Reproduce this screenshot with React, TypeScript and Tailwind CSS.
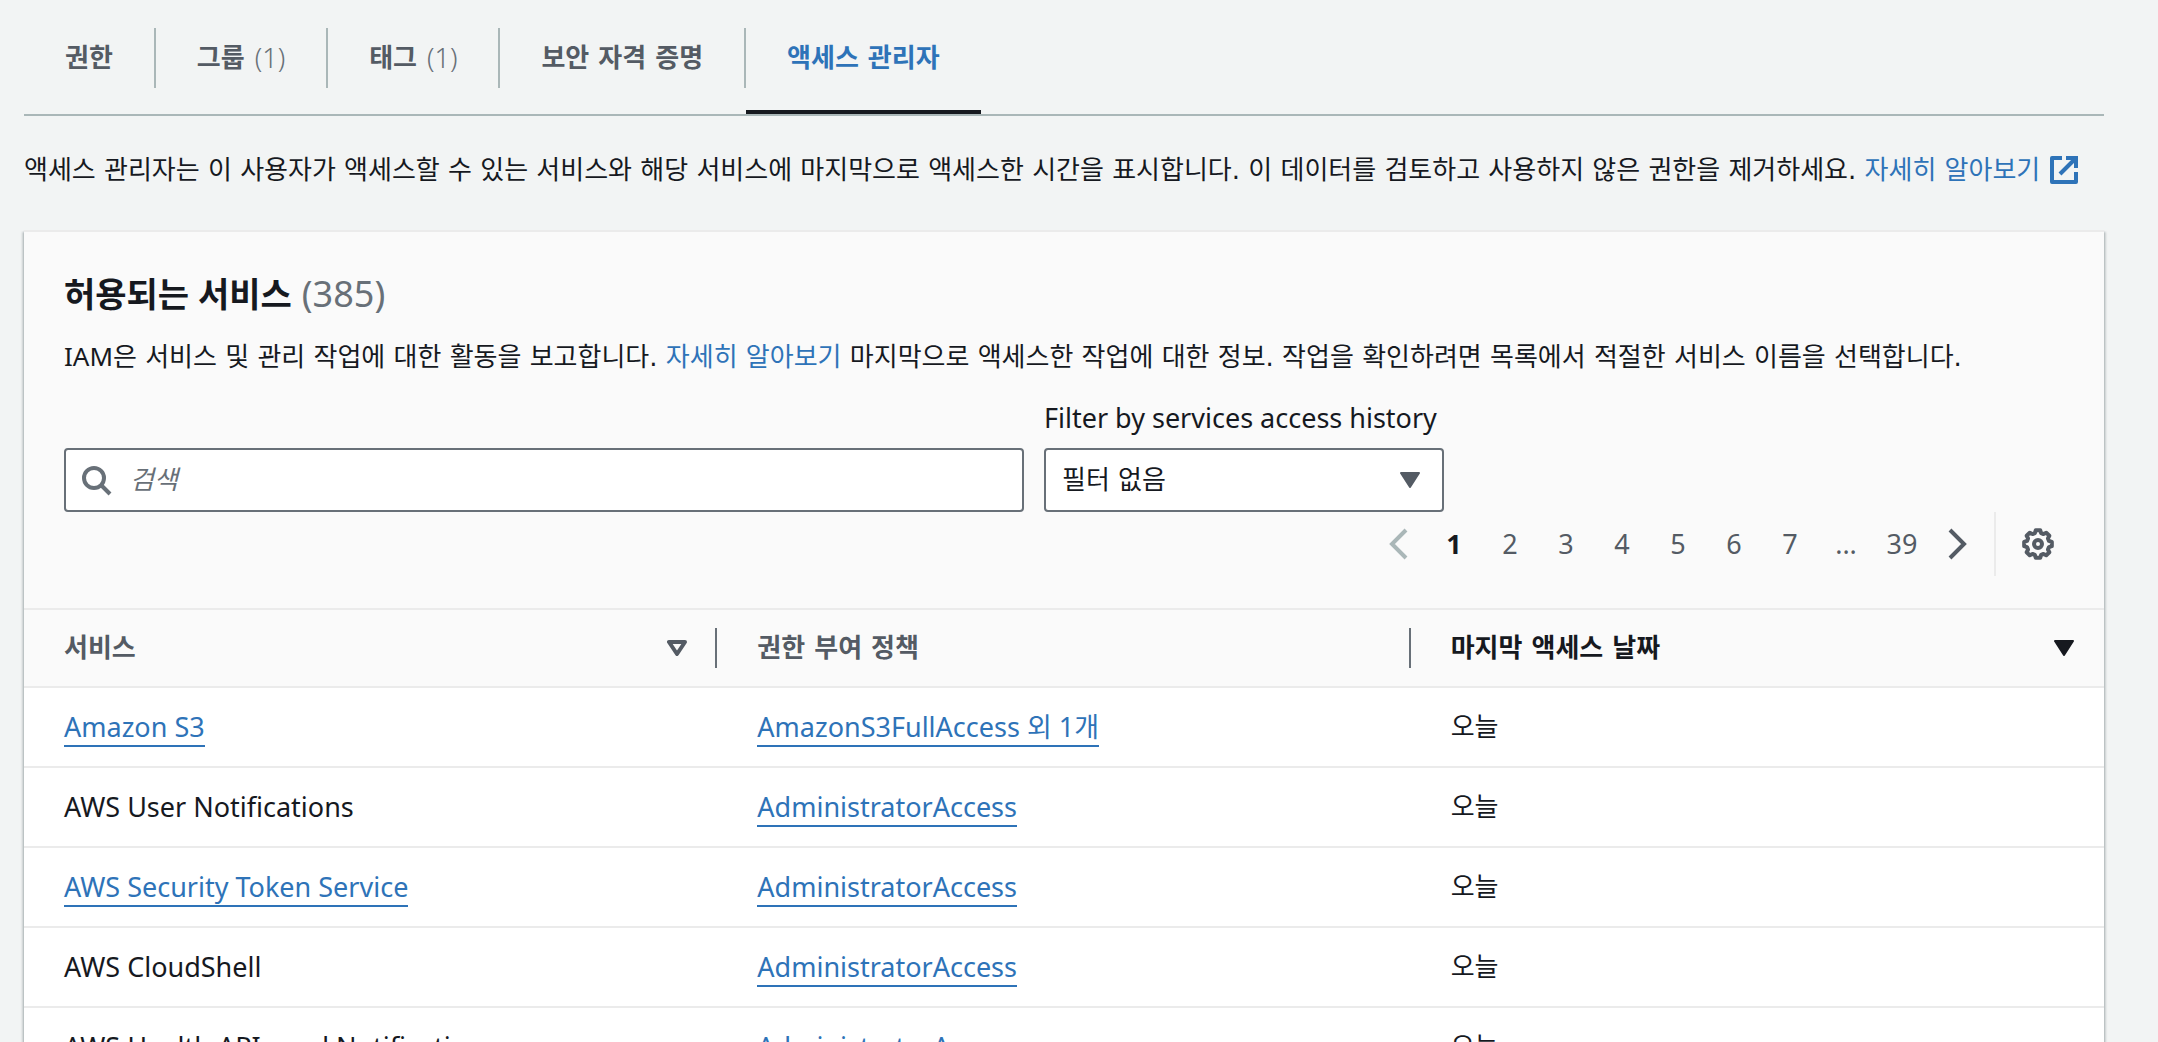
import type { ReactNode } from "react";

const ko = "font-['DejaVu_Sans','Noto_Sans_CJK_KR',sans-serif] text-[26px]";
const latin = "font-['Noto_Sans','Noto_Sans_CJK_KR',sans-serif] text-[27px]";

const tabs = [
  { label: "권한" },
  { label: "그룹", count: 1 },
  { label: "태그", count: 1 },
  { label: "보안 자격 증명" },
  { label: "액세스 관리자", active: true },
];

const rows = [
  { service: "Amazon S3", link: true, policy: "AmazonS3FullAccess", more: "외 1개" },
  { service: "AWS User Notifications", policy: "AdministratorAccess" },
  { service: "AWS Security Token Service", link: true, policy: "AdministratorAccess" },
  { service: "AWS CloudShell", policy: "AdministratorAccess" },
  { service: "AWS Health APIs and Notifications", policy: "AdministratorAccess" },
];

const pages = ["1", "2", "3", "4", "5", "6", "7", "...", "39"];

function gearPath() {
  const points: string[] = [];
  for (let i = 0; i < 8; i++) {
    const shape: [number, number][] = [
      [-9, 14],
      [9, 14],
      [16, 11.4],
      [29, 11.4],
    ];
    for (const [offset, radius] of shape) {
      const angle = ((i * 45 + offset) * Math.PI) / 180;
      points.push(`${(16 + radius * Math.sin(angle)).toFixed(2)} ${(16 - radius * Math.cos(angle)).toFixed(2)}`);
    }
  }
  return `M${points.join("L")}Z`;
}

function GearIcon() {
  return (
    <svg viewBox="0 0 32 32" className="size-8" fill="none" stroke="currentColor" strokeWidth="4" strokeLinejoin="round" aria-hidden="true">
      <path d={gearPath()} />
      <circle cx="16" cy="16" r="4" />
    </svg>
  );
}

function SearchIcon() {
  return (
    <svg viewBox="0 0 32 32" className="size-8" fill="none" stroke="currentColor" strokeWidth="4" aria-hidden="true">
      <circle cx="14" cy="14" r="10" />
      <path d="M21 21l9 9" />
    </svg>
  );
}

function ExternalIcon() {
  return (
    <svg viewBox="0 0 16 16" className="size-8" fill="none" stroke="currentColor" strokeWidth="2" aria-hidden="true">
      <path d="M7 2H2v12h12V9" strokeLinejoin="round" />
      <path d="M9 2h5v5" />
      <path d="M6 10l8-8" />
    </svg>
  );
}

function Triangle({ hollow }: { hollow?: boolean }) {
  return (
    <svg viewBox="0 0 20 16" className="h-4 w-5 shrink-0" stroke="currentColor" strokeLinejoin="round" aria-hidden="true">
      {hollow ? (
        <path d="M2 2h16l-8 12z" fill="none" strokeWidth="4" />
      ) : (
        <path d="M1 1h18l-9 14z" fill="currentColor" strokeWidth="2" />
      )}
    </svg>
  );
}

function Chevron({ left }: { left?: boolean }) {
  return (
    <svg viewBox="0 0 32 32" className="size-8" fill="none" stroke="currentColor" strokeWidth="4" aria-hidden="true">
      <path d={left ? "M24 2L10 16l14 14" : "M8 2l14 14L8 30"} />
    </svg>
  );
}

function HeaderCell({ children, dark, icon, divider }: { children: ReactNode; dark?: boolean; icon?: ReactNode; divider?: boolean }) {
  return (
    <th scope="col" className="w-1/3 border-b-2 border-[#ebebeb] p-0 text-left">
      <div className={`my-[18px] flex h-10 border-r-2 ${divider ? "border-[#687078]" : "border-transparent"}`}>
        <button
          type="button"
          className={`${ko} flex w-full items-center justify-between pr-7 pl-10 font-bold ${dark ? "text-[#16191f]" : "text-[#545b64]"}`}
        >
          <span>{children}</span>
          {icon}
        </button>
      </div>
    </th>
  );
}

function TableLink({ children }: { children: ReactNode }) {
  return (
    <a href="#" className="inline-block border-b-2 border-[#2e73b8] leading-9 text-[#2e73b8]">
      {children}
    </a>
  );
}

export default function App() {
  return (
    <main className={`${ko} h-screen overflow-hidden bg-[#f2f4f4] pt-7 pr-[54px] pl-6 text-[#16191f]`}>
      <nav className="flex border-b-2 border-[#aab7b8]" aria-label="사용자 세부 정보">
        {tabs.map((tab) => (
          <div key={tab.label} className="flex h-[86px] flex-col justify-between">
            <button
              type="button"
              className={`flex h-[60px] items-center gap-[10px] px-[41px] leading-10 font-bold whitespace-nowrap ${
                tab.active ? "text-[#2e73b8]" : "border-r-2 border-[#aab7b8] text-[#545b64]"
              }`}
            >
              {tab.label}
              {tab.count && <span className="font-['Noto_Sans'] text-[27px] font-light text-[#687078]">({tab.count})</span>}
            </button>
            {tab.active && <div className="h-1 bg-[#16191f]" />}
          </div>
        ))}
      </nav>

      <p className="mt-[34px] h-10 leading-10 whitespace-nowrap">
        액세스 관리자는 이 사용자가 액세스할 수 있는 서비스와 해당 서비스에 마지막으로 액세스한 시간을 표시합니다. 이 데이터를 검토하고 사용하지 않은 권한을
        제거하세요.{" "}
        <a href="#" className="inline-flex items-center gap-2 align-top text-[#2e73b8]">
          자세히 알아보기
          <ExternalIcon />
        </a>
      </p>

      <section className="mt-10 border-t-2 border-[#ebebeb] bg-white shadow-[0_2px_2px_rgba(0,28,36,0.3),2px_2px_2px_rgba(0,28,36,0.15),-2px_2px_2px_rgba(0,28,36,0.15)]">
        <header className="bg-[#fafafa] px-10 pt-10 pb-8">
          <h2 className="flex items-center gap-[10px] font-['Noto_Sans','Noto_Sans_CJK_KR',sans-serif] text-[34px] leading-11 font-bold">
            허용되는 서비스
            <span className="text-4xl leading-11 font-normal text-[#687078]">(385)</span>
          </h2>
          <p className="mt-5 h-10 leading-10 whitespace-nowrap">
            <span className="font-['Noto_Sans']">IAM</span>은 서비스 및 관리 작업에 대한 활동을 보고합니다.{" "}
            <a href="#" className="text-[#2e73b8]">
              자세히 알아보기
            </a>{" "}
            마지막으로 액세스한 작업에 대한 정보. 작업을 확인하려면 목록에서 적절한 서비스 이름을 선택합니다.
          </p>

          <div className="mt-[22px] flex items-end gap-5">
            <div className="relative w-[48%] text-[#687078]">
              <div className="pointer-events-none absolute inset-y-0 left-4 flex items-center">
                <SearchIcon />
              </div>
              <input
                type="search"
                aria-label="검색"
                placeholder="검색"
                className="block h-16 w-full rounded-sm border-2 border-[#687078] bg-white pr-4 pl-16 placeholder:text-[#687078] placeholder:italic"
              />
            </div>
            <div className="w-1/5">
              <label htmlFor="history" className={`${latin} block leading-10 whitespace-nowrap`}>
                Filter by services access history
              </label>
              <div className="relative mt-[10px]">
                <select id="history" className="block h-16 w-full appearance-none rounded-sm border-2 border-[#687078] bg-white pr-14 pl-4">
                  <option>필터 없음</option>
                </select>
                <div className="pointer-events-none absolute inset-y-0 right-6 flex items-center text-[#545b64]">
                  <Triangle />
                </div>
              </div>
            </div>
          </div>

          <div className="flex h-16 items-center justify-end font-['Noto_Sans'] text-[27px] text-[#545b64]">
            <button type="button" disabled aria-label="이전 페이지" className="flex w-14 justify-center text-[#aab7b8]">
              <Chevron left />
            </button>
            {pages.map((page) =>
              page === "..." ? (
                <span key={page} className="w-14 text-center">
                  {page}
                </span>
              ) : (
                <button key={page} type="button" className={page === "1" ? "w-14 font-bold text-[#16191f]" : "w-14"}>
                  {page}
                </button>
              ),
            )}
            <button type="button" aria-label="다음 페이지" className="flex w-14 justify-center">
              <Chevron />
            </button>
            <div className="ml-2 flex h-16 items-center border-l-2 border-[#ebebeb] pr-[10px] pl-[26px]">
              <button type="button" aria-label="기본 설정">
                <GearIcon />
              </button>
            </div>
          </div>
        </header>

        <table className="w-full table-fixed border-separate border-spacing-0">
          <thead className="bg-[#fafafa]">
            <tr className="[&>th]:border-t-2">
              <HeaderCell divider icon={<Triangle hollow />}>
                서비스
              </HeaderCell>
              <HeaderCell divider>권한 부여 정책</HeaderCell>
              <HeaderCell dark icon={<Triangle />}>
                마지막 액세스 날짜
              </HeaderCell>
            </tr>
          </thead>
          <tbody className="[&_td]:h-20 [&_td]:border-b-2 [&_td]:border-[#ebebeb] [&_td]:py-0 [&_td]:pl-10 [&_td]:whitespace-nowrap">
            {rows.map((row) => (
              <tr key={row.service}>
                <td className={latin}>{row.link ? <TableLink>{row.service}</TableLink> : row.service}</td>
                <td className={latin}>
                  <TableLink>
                    {row.policy}
                    {row.more && ` ${row.more}`}
                  </TableLink>
                </td>
                <td>오늘</td>
              </tr>
            ))}
          </tbody>
        </table>
      </section>
    </main>
  );
}
